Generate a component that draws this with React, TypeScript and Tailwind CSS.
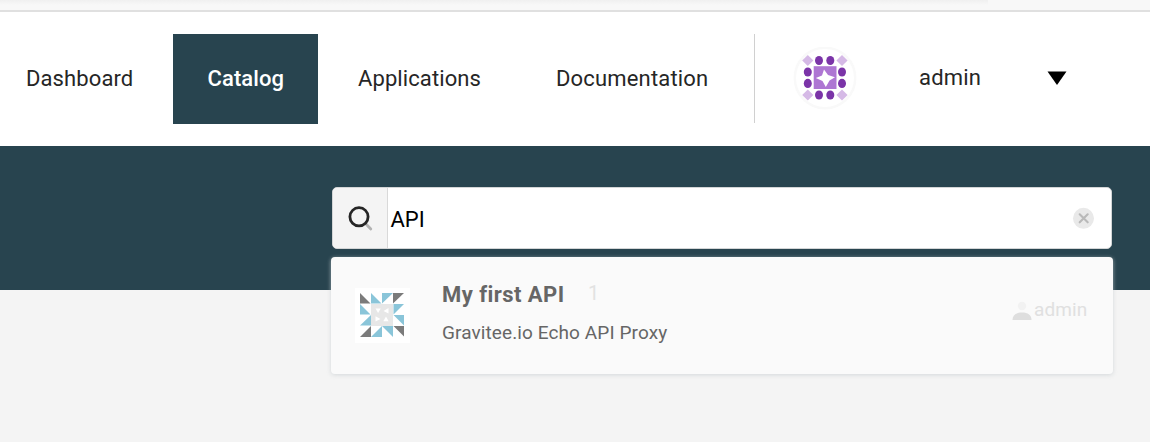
import React from "react";

type NavItem = { label: string; box: string; active?: boolean };

const navItems: NavItem[] = [
  { label: "Dashboard", box: "w-[168px] pl-[26px] tracking-[0.1px]" },
  { label: "Catalog", box: "w-[145px] pl-[34.5px] tracking-[0.1px]", active: true },
  { label: "Applications", box: "w-[193px] pl-[35px] tracking-[0.1px]" },
  { label: "Documentation", box: "w-[222px] pl-[35px] tracking-[0.17px]" },
];

function UserAvatar() {
  const dots = [
    [30, 13.5], [41.3, 13.5], [30, 48], [41.3, 48],
    [18.8, 25], [18.8, 36.4], [53, 25], [53, 36.4],
  ];
  const corners = [[18.8, 13.5], [53, 13.5], [18.8, 48], [53, 48]];
  return (
    <svg className="h-[63px] w-[72px]" viewBox="0 0 72 63" aria-hidden="true">
      <circle cx="36" cy="31" r="30.2" fill="#fff" stroke="#f9f9f9" strokeWidth="2.5" />
      {corners.map(([x, y]) => (
        <path key={`${x}-${y}`} d={`M${x} ${y - 5.6}L${x + 5.6} ${y}L${x} ${y + 5.6}L${x - 5.6} ${y}Z`} fill="#d5b9e6" />
      ))}
      {dots.map(([x, y]) => (
        <ellipse key={`${x}-${y}`} cx={x} cy={y} rx="4" ry="4.6" fill="#7b34a8" />
      ))}
      <path d="M24.7 19.2H47.5V42H24.7Z" fill="#ae76d3" />
      <path d="M35 22.5L39 28L46 30.2L40.5 33.5L36.8 40L33.5 34L26.8 31L33 28.5Z" fill="#fff" />
    </svg>
  );
}

function ApiPicture() {
  return (
    <svg className="h-[55px] w-[55px]" viewBox="0 0 55 55" aria-hidden="true">
      <path d="M0 0H55V55H0Z" fill="#fff" />
      <g fill="#7b7b7b">
        <path d="M5 5V15.5H15.5Z" />
        <path d="M38 5H49L38 15.5Z" />
        <path d="M16 38L5 49H16Z" />
        <path d="M38.5 38H49V48.5Z" />
      </g>
      <g fill="#8ac5d9">
        <path d="M16 5V15.5H26.5Z" />
        <path d="M27 5H38L27 15.5Z" />
        <path d="M38.5 16H49L38.5 26.5Z" />
        <path d="M38.5 27H49V37.5Z" />
        <path d="M5 16V26.5H15.5Z" />
        <path d="M16 27V37.5H5Z" />
        <path d="M27 38V49H16Z" />
        <path d="M27 38H38V49Z" />
      </g>
      <path d="M16 16H38V38H16Z" fill="#e7e7e7" />
      <g fill="#fff">
        <path d="M20.5 20.5H25.7L23.1 25Z" />
        <path d="M33.5 20V25.5L28.5 23Z" />
        <path d="M20.5 28.3V33.5L25.5 31Z" />
        <path d="M28.3 33.3H33.6L31 28.6Z" />
      </g>
    </svg>
  );
}

function Header() {
  return (
    <header className="flex h-[134px] items-center bg-white">
      <nav className="flex h-[90px] gap-[5px]">
        {navItems.map((item) => (
          <a
            key={item.label}
            className={`flex h-[90px] shrink-0 items-center ${item.box} ${
              item.active ? "bg-[#28444f] font-medium text-white" : "text-[#262626]"
            }`}
          >
            {item.label}
          </a>
        ))}
      </nav>
      <div className="mb-px ml-[11px] h-[89px] w-px bg-[#d0d0d0]" />
      <div className="mb-px ml-[33.5px] flex">
        <UserAvatar />
      </div>
      <span className="mb-[2px] ml-[58.5px] w-[127.5px] tracking-[0.2px] text-[#262626]">admin</span>
      <svg className="mb-[2px] h-[14px] w-[20px]" viewBox="0 0 20 14" aria-hidden="true">
        <path d="M.5 .5H19.5L10 14Z" fill="#000" />
      </svg>
    </header>
  );
}

function SearchField() {
  return (
    <div className="flex h-[62px] w-[780px] overflow-hidden rounded-[5px] border border-[#d3d5d6] bg-white">
      <div className="flex w-[55px] items-center justify-center border-r border-[#d9d9d9] bg-[#f4f4f4]">
        <svg className="h-7 w-7" viewBox="0 0 28 28" fill="none" aria-hidden="true">
          <path d="M20 20L24.8 25" stroke="#b3b3b3" strokeWidth="2.8" strokeLinecap="round" />
          <circle cx="13" cy="12.8" r="9.1" stroke="#262626" strokeWidth="2.8" />
        </svg>
      </div>
      <span className="flex flex-1 items-center pl-[2.5px] pt-[3px] text-black">API</span>
      <div className="flex items-center pr-[17px]">
        <svg className="h-[22px] w-[22px]" viewBox="0 0 22 22" aria-hidden="true">
          <circle cx="11.5" cy="11.3" r="10.5" fill="#e9e9e9" />
          <path d="M7.7 7.3L15.7 15.3M15.7 7.3L7.7 15.3" stroke="#b9b9b9" strokeWidth="2.1" strokeLinecap="round" />
        </svg>
      </div>
    </div>
  );
}

function SearchResult() {
  return (
    <div className="flex h-[117px] w-[782px] rounded-[4px] bg-[#fafafa] pl-[24px] shadow-[0_1px_4px_0_rgba(200,205,208,0.7)]">
      <div className="mt-[31px]">
        <ApiPicture />
      </div>
      <div className="ml-8 mt-[23px] flex flex-1 flex-col">
        <div className="flex h-[30px] items-center">
          <span className="w-[146px] text-[22px] font-bold tracking-[0.45px] text-[#666]">My first API</span>
          <span className="mb-[4px] text-[20px] text-[#e2e2e2]">1</span>
        </div>
        <div className="mt-[8px] flex h-[30px] items-center text-[19px] tracking-[0.1px] text-[#666]">
          Gravitee.io Echo API Proxy
        </div>
      </div>
      <div className="mt-[38px] flex h-[30px] w-[101px] items-center">
        <svg className="mr-[2px] mt-[2px] h-5 w-5 shrink-0" viewBox="0 0 20 20" aria-hidden="true">
          <circle cx="10" cy="5" r="4.2" fill="#f2f2f2" />
          <path d="M.5 19C.5 14 4 11.5 10 11.5S19.5 14 19.5 19Z" fill="#dedede" />
        </svg>
        <span className="text-[19px] tracking-[0.1px] text-[#e0e0e0]">admin</span>
      </div>
    </div>
  );
}

export default function App() {
  return (
    <div className="flex h-[442px] w-[1150px] flex-col overflow-hidden bg-[#f4f4f4] font-[Roboto,sans-serif] text-[22px] leading-[30px]">
      <div className="flex h-3 shrink-0 border-b-2 border-[#e0e0e0] bg-[#f8f8f8]">
        <div className="h-[5px] w-[988px] bg-linear-to-b from-[#f0f0f0] to-[#f8f8f8]" />
      </div>
      <Header />
      <main className="flex h-[144px] shrink-0 flex-col bg-[#28444f] pt-[41px]">
        <div className="ml-[332px]">
          <SearchField />
        </div>
        <div className="ml-[331px] mt-[8px]">
          <SearchResult />
        </div>
      </main>
    </div>
  );
}
